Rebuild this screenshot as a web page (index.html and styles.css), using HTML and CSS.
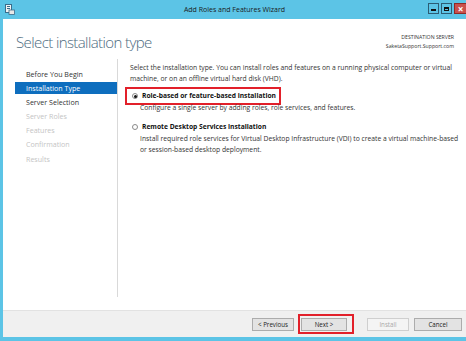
FILE: index.html
```html
<!DOCTYPE html>
<html lang="en">
<head>
  <meta charset="UTF-8">
  <title>Add Roles and Features Wizard</title>
  <link rel="stylesheet" href="styles.css">
</head>
<body>
  <div class="window">
    <div class="titlebar">
      <svg class="app-icon" width="10" height="11" viewBox="0 0 10 11">
        <rect x="0.5" y="0.5" width="6" height="8" fill="#f4f4f4" stroke="#3a6d8c"/>
        <rect x="2" y="2" width="3" height="1" fill="#3a6d8c"/>
        <rect x="2" y="4" width="3" height="1" fill="#3a6d8c"/>
        <rect x="4" y="6" width="5.5" height="4.5" fill="#e8e8e8" stroke="#3a6d8c" stroke-width="0.8"/>
      </svg>
      <span class="title">Add Roles and Features Wizard</span>
      <div class="controls">
        <span class="ctl ctl-min"><i></i></span>
        <span class="ctl ctl-max"><i></i></span>
        <span class="ctl ctl-close">×</span>
      </div>
    </div>

    <div class="header">
      <h1>Select installation type</h1>
      <div class="dest">
        <div>DESTINATION SERVER</div>
        <div>SaketaSupport.Support.com</div>
      </div>
    </div>

    <div class="main">
      <ul class="steps">
        <li>Before You Begin</li>
        <li class="active">Installation Type</li>
        <li>Server Selection</li>
        <li class="off">Server Roles</li>
        <li class="off">Features</li>
        <li class="off">Confirmation</li>
        <li class="off">Results</li>
      </ul>

      <div class="content">
        <p class="intro">Select the installation type. You can install roles and features on a running physical computer or virtual machine, or on an offline virtual hard disk (VHD).</p>

        <div class="option">
          <div class="option-head marked">
            <span class="radio checked"></span>
            <span class="option-name">Role-based or feature-based installation</span>
          </div>
          <p class="option-desc">Configure a single server by adding roles, role services, and features.</p>
        </div>

        <div class="option">
          <div class="option-head">
            <span class="radio"></span>
            <span class="option-name">Remote Desktop Services installation</span>
          </div>
          <p class="option-desc">Install required role services for Virtual Desktop Infrastructure (VDI) to create a virtual machine-based or session-based desktop deployment.</p>
        </div>
      </div>
    </div>

    <div class="footer">
      <button class="btn">&lt; Previous</button>
      <span class="marked-btn"><button class="btn">Next &gt;</button></span>
      <button class="btn disabled">Install</button>
      <button class="btn cancel">Cancel</button>
    </div>
  </div>
</body>
</html>
```

FILE: styles.css
```css
* {
  box-sizing: border-box;
}

body {
  margin: 0;
  font-family: 'Open Sans', 'Noto Sans', sans-serif;
  color: #1e1e1e;
  background: #5cc4e6;
}

.window {
  width: 466px;
  height: 341px;
  display: flex;
  flex-direction: column;
  background: #5cc4e6;
  padding: 0 0 4px 3px;
}

.titlebar {
  height: 19px;
  display: flex;
  align-items: center;
  position: relative;
  padding-left: 2px;
}

.app-icon {
  display: block;
}

.title {
  position: absolute;
  left: 0;
  right: 0;
  text-align: center;
  font-size: 7px;
  color: #1a1a1a;
  pointer-events: none;
}

.controls {
  margin-left: auto;
  display: flex;
  gap: 2px;
  align-self: flex-start;
  margin-top: 3px;
}

.ctl {
  width: 11px;
  height: 11px;
  border: 1px solid #2b5c74;
  background: #5cc4e6;
  display: flex;
  align-items: center;
  justify-content: center;
}

.ctl-min i {
  width: 5px;
  height: 2px;
  margin-top: 3px;
  background: #111;
}

.ctl-max i {
  width: 5px;
  height: 4px;
  border: 1px solid #111;
  border-top-width: 2px;
}

.ctl-close {
  width: 12px;
  background: #c9504c;
  border-color: #8e2a26;
  border-right: none;
  color: #fff;
  font-size: 10px;
  line-height: 1;
  font-weight: 700;
}

.header {
  height: 40px;
  background: #fff;
  display: flex;
  justify-content: space-between;
  align-items: flex-start;
  padding: 0 12px 0 13px;
}

h1 {
  margin: 13px 0 0;
  font-size: 15px;
  font-weight: 300;
  color: #4d6a7e;
  letter-spacing: -0.6px;
}

.dest {
  margin-top: 14px;
  text-align: right;
  font-size: 5.2px;
  line-height: 9px;
  color: #333;
}

.main {
  flex: 1;
  display: flex;
  background: #fff;
  padding-bottom: 13px;
}

.steps {
  list-style: none;
  margin: 0;
  padding: 9px 0 0 12px;
  width: 115px;
  border-right: 1px solid #d9d9d9;
  font-size: 7.1px;
}

.steps li {
  height: 12px;
  line-height: 12px;
  padding-left: 11px;
  margin-bottom: 2.1px;
  color: #333;
}

.steps li.active {
  background: #0e6ebe;
  color: #fff;
}

.steps li.off {
  color: #c4c4c4;
}

.content {
  flex: 1;
  padding: 4px 2px 0 12px;
  font-size: 6.75px;
  line-height: 10.5px;
}

.intro {
  margin: 0 0 3px;
  color: #333;
}

.option {
  margin-bottom: 5px;
}

.option-head {
  display: inline-flex;
  align-items: center;
  gap: 4px;
  height: 18px;
  padding: 0 3px 0 5px;
  border: 2px solid transparent;
  font-weight: 700;
  font-size: 6.7px;
  margin-left: -5px;
}

.option-head.marked {
  border-color: #e2202a;
}

.radio {
  width: 6px;
  height: 6px;
  border-radius: 50%;
  border: 1px solid #8a8a8a;
  background: #fff;
  display: flex;
  align-items: center;
  justify-content: center;
}

.radio.checked::after {
  content: "";
  width: 3px;
  height: 3px;
  border-radius: 50%;
  background: #111;
}

.option-name {
  color: #111;
}

.option-desc {
  margin: -3px 0 0;
  padding-left: 10px;
  line-height: 11px;
  color: #333;
}

.footer {
  height: 27px;
  background: #f0f0f0;
  border-top: 1px solid #e2e2e2;
  display: flex;
  align-items: center;
  justify-content: flex-end;
  padding-right: 4px;
}

.btn {
  width: 42px;
  height: 13px;
  padding: 0;
  font-family: inherit;
  font-size: 6.2px;
  color: #222;
  background: #e3e3e3;
  border: 1px solid #acacac;
}

.btn.disabled {
  color: #a8a8a8;
  background: #f4f4f4;
  border-color: #cfcfcf;
  margin-left: 13px;
}

.btn.cancel {
  width: 48px;
  margin-left: 5px;
}

.marked-btn {
  margin-left: 4px;
  height: 20px;
  padding: 0 5px 0 1px;
  border: 2px solid #e2202a;
  display: flex;
  align-items: center;
}

.marked-btn .btn {
  width: 46px;
}
```
